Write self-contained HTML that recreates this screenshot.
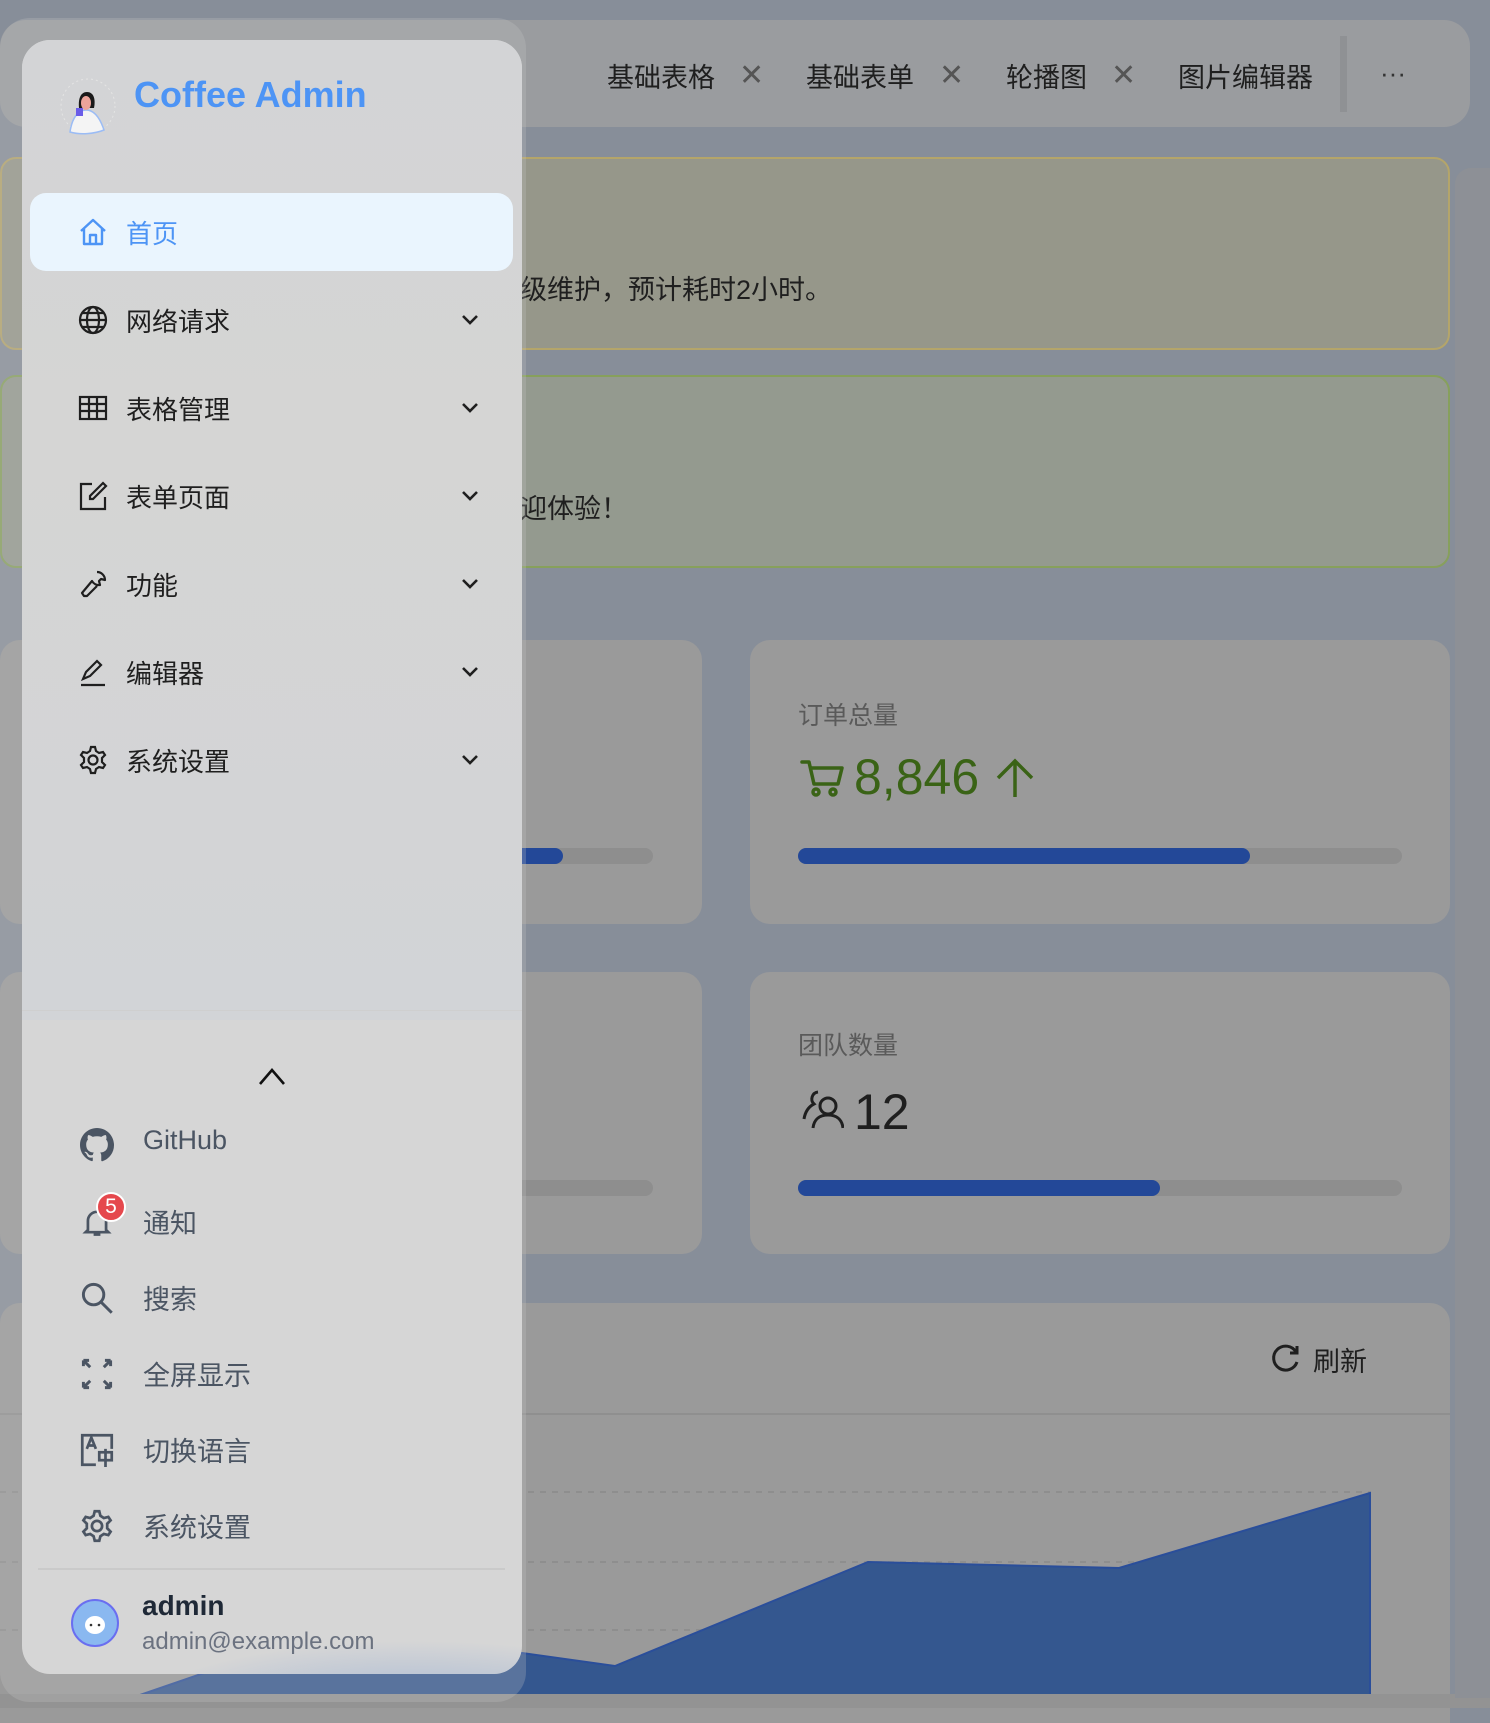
<!DOCTYPE html>
<html><head><meta charset="utf-8"><style>
*{margin:0;padding:0;box-sizing:border-box}
body{width:1490px;height:1708px;overflow:hidden;background:#878e99;font-family:"Liberation Sans","Noto Sans CJK SC",sans-serif;position:relative;color:#1f1f1f}
.abs{position:absolute}
.card{position:absolute;background:#9a9a9a;border-radius:20px}
.tab{position:absolute;top:56px;font-size:27px;color:#1f1f1f}
.x{position:absolute;top:58px;font-size:30px;color:#555;font-weight:300}
.item{position:absolute;left:30px;width:483px;height:78px;display:flex;align-items:center}
.item .ic{position:absolute;left:48px;width:30px;height:30px}
.item .t{position:absolute;left:96px;font-size:26px;color:#1f1f1f}
.item .ch{position:absolute;left:430px;width:20px;height:20px}
.bi{position:absolute;left:80px;height:40px;width:400px}
.bi svg{position:absolute;left:0;top:5px;width:34px;height:34px}
.bi .t{position:absolute;left:63px;top:2px;font-size:27px;color:#4b5563}
</style></head><body>
<!-- tab bar -->
<div class="abs" style="left:0;top:20px;width:1470px;height:107px;background:#9a9c9f;border-radius:26px"></div>
<div class="tab" style="left:607px">基础表格</div><div class="x" style="left:739px">✕</div>
<div class="tab" style="left:806px">基础表单</div><div class="x" style="left:939px">✕</div>
<div class="tab" style="left:1006px">轮播图</div><div class="x" style="left:1111px">✕</div>
<div class="tab" style="left:1178px">图片编辑器</div>
<div class="abs" style="left:1340px;top:36px;width:7px;height:76px;background:#8f9194"></div>
<div class="abs" style="left:1380px;top:58px;font-size:26px;color:#333">···</div>
<!-- alerts -->
<div class="abs" style="left:0;top:157px;width:1450px;height:193px;background:#96978a;border:2px solid #b4a56a;border-radius:16px"></div>
<div class="abs" style="left:520px;top:268px;font-size:27px">级维护，预计耗时2小时。</div>
<div class="abs" style="left:0;top:375px;width:1450px;height:193px;background:#949a8f;border:2px solid #87a05c;border-radius:16px"></div>
<div class="abs" style="left:520px;top:487px;font-size:27px">迎体验！</div>
<!-- stat cards -->
<div class="card" style="left:0;top:640px;width:702px;height:284px"></div>
<div class="abs" style="left:50px;top:848px;width:603px;height:16px;background:#8e8e8e;border-radius:8px"></div>
<div class="abs" style="left:50px;top:848px;width:513px;height:16px;background:#234898;border-radius:8px"></div>
<div class="card" style="left:750px;top:640px;width:700px;height:284px"></div>
<div class="abs" style="left:798px;top:696px;font-size:25px;color:#5a5a5a">订单总量</div>
<svg class="abs" style="left:800px;top:758px" width="44" height="40" viewBox="0 0 44 40" fill="none" stroke="#3a6316" stroke-width="3.5" stroke-linecap="round" stroke-linejoin="round"><path d="M2 4h7l5 22h24l4-16H12"/><circle cx="16" cy="34" r="3"/><circle cx="33" cy="34" r="3"/></svg>
<div class="abs" style="left:854px;top:748px;font-size:50px;color:#3a6316">8,846</div>
<svg class="abs" style="left:995px;top:758px" width="40" height="40" viewBox="0 0 40 40" fill="none" stroke="#3a6316" stroke-width="3.5"><path d="M20 39V3M3 20L20 3l17 17"/></svg>
<div class="abs" style="left:798px;top:848px;width:604px;height:16px;background:#8e8e8e;border-radius:8px"></div>
<div class="abs" style="left:798px;top:848px;width:452px;height:16px;background:#234898;border-radius:8px"></div>
<div class="card" style="left:0;top:972px;width:702px;height:282px"></div>
<div class="abs" style="left:50px;top:1180px;width:603px;height:16px;background:#8e8e8e;border-radius:8px"></div>
<div class="card" style="left:750px;top:972px;width:700px;height:282px"></div>
<div class="abs" style="left:798px;top:1026px;font-size:25px;color:#5a5a5a">团队数量</div>
<svg class="abs" style="left:800px;top:1088px" width="44" height="42" viewBox="0 0 44 42" fill="none" stroke="#1f1f1f" stroke-width="3"><circle cx="28" cy="18" r="8"/><path d="M13 40c1-9 7-13 15-13s14 4 15 13"/><path d="M18 4a7 7 0 0 0-4 12c-6 3-9 9-10 15"/></svg>
<div class="abs" style="left:854px;top:1083px;font-size:50px;color:#1f1f1f">12</div>
<div class="abs" style="left:798px;top:1180px;width:604px;height:16px;background:#8e8e8e;border-radius:8px"></div>
<div class="abs" style="left:798px;top:1180px;width:362px;height:16px;background:#234898;border-radius:8px"></div>
<!-- chart card -->
<div class="card" style="left:0;top:1303px;width:1450px;height:420px;border-radius:20px 20px 0 0"></div>
<div class="abs" style="left:0;top:1413px;width:1450px;height:2px;background:#8f8f8f"></div>
<svg class="abs" style="left:1270px;top:1343px" width="30" height="30" viewBox="0 0 30 30" fill="none" stroke="#1f1f1f" stroke-width="3"><path d="M26 9A12 12 0 1 0 27 19"/><path d="M27 3v7h-7"/></svg>
<div class="abs" style="left:1313px;top:1340px;font-size:27px">刷新</div>
<svg class="abs" style="left:0;top:1480px" width="1450" height="215"><g stroke="#8a8a8a" stroke-dasharray="6 6" stroke-width="1.5"><line x1="0" y1="12" x2="1370" y2="12"/><line x1="0" y1="82" x2="1370" y2="82"/><line x1="0" y1="150" x2="1370" y2="150"/></g><polygon points="140,215 300,160 522,173 615,186 868,82 1119,88 1370,13 1370,215" fill="#34578f" stroke="#2a4e9a" stroke-width="2"/></svg>
<div class="abs" style="left:0;top:1694px;width:1490px;height:14px;background:#939393"></div>
<div class="abs" style="left:1455px;top:168px;width:35px;height:1530px;background:#8d9096;border-radius:16px 0 0 0"></div>
<!-- sidebar halo -->
<div class="abs" style="left:0;top:18px;width:526px;height:1684px;background:rgba(200,200,200,0.25);border-radius:30px"></div>
<!-- sidebar -->
<div class="abs" style="left:22px;top:40px;width:500px;height:1634px;background:#d6d6d6;border-radius:28px;overflow:hidden">
 <div class="abs" style="left:0;top:0;width:500px;height:980px;background:linear-gradient(#d3d4d6,#d5d5d4 40%,#d2d4d7)"></div>
 <div class="abs" style="left:0;top:970px;width:500px;height:1px;background:#cfcfcf"></div>
 <div class="abs" style="left:100px;top:1600px;width:420px;height:80px;background:radial-gradient(ellipse at 70% 100%,#9fb3d3,rgba(160,180,210,0) 70%)"></div>
</div>
<!-- logo -->
<svg class="abs" style="left:60px;top:76px" width="56" height="62" viewBox="0 0 56 62"><circle cx="28" cy="30" r="27" fill="none" stroke="#e4e4e4" stroke-dasharray="2 3"/><path d="M10 56c2-14 8-22 16-22s14 8 18 20c-10 4-24 5-34 2z" fill="#f4f4f4" stroke="#9bbcf5" stroke-width="1.5"/><path d="M19 32c-1-10 2-16 8-16s9 6 7 16z" fill="#1a1a1a"/><ellipse cx="26" cy="27" rx="5" ry="7" fill="#eda49a"/><rect x="16" y="32" width="7" height="8" fill="#6a5ce8"/></svg>
<div class="abs" style="left:134px;top:74px;font-size:36px;font-weight:bold;color:#4d94f5">Coffee Admin</div>
<!-- menu -->
<div class="item" style="top:193px;background:#eaf5fe;border-radius:16px">
 <svg class="ic" viewBox="0 0 30 30" fill="none" stroke="#4d94f5" stroke-width="2.4" stroke-linejoin="round"><path d="M3 14L15 3l12 11M6 11v16h18V11M12 27v-9h6v9"/></svg>
 <span class="t" style="color:#4d94f5">首页</span></div>
<div class="item" style="top:281px"><svg class="ic" viewBox="0 0 30 30" fill="none" stroke="#1f1f1f" stroke-width="2.2"><circle cx="15" cy="15" r="13"/><ellipse cx="15" cy="15" rx="6" ry="13"/><path d="M2 15h26M4 8h22M4 22h22"/></svg><span class="t">网络请求</span><svg class="ch" viewBox="0 0 20 20" fill="none" stroke="#1f1f1f" stroke-width="2.6"><path d="M3 6l7 7 7-7"/></svg></div>
<div class="item" style="top:369px"><svg class="ic" viewBox="0 0 30 30" fill="none" stroke="#1f1f1f" stroke-width="2.2"><rect x="2" y="4" width="26" height="22"/><path d="M2 11h26M2 18h26M11 4v22M19 4v22"/></svg><span class="t">表格管理</span><svg class="ch" viewBox="0 0 20 20" fill="none" stroke="#1f1f1f" stroke-width="2.6"><path d="M3 6l7 7 7-7"/></svg></div>
<div class="item" style="top:457px"><svg class="ic" viewBox="0 0 30 30" fill="none" stroke="#1f1f1f" stroke-width="2.2"><path d="M14 3H3v25h24V16"/><path d="M25 2l3 3-13 13H12v-3z"/></svg><span class="t">表单页面</span><svg class="ch" viewBox="0 0 20 20" fill="none" stroke="#1f1f1f" stroke-width="2.6"><path d="M3 6l7 7 7-7"/></svg></div>
<div class="item" style="top:545px"><svg class="ic" viewBox="0 0 30 30" fill="none" stroke="#1f1f1f" stroke-width="2.2" stroke-linejoin="round"><path d="M19 3a8 8 0 0 1 8 8l-4-1-2 2 1 4a8 8 0 0 1-8-4L4 24l2 3 3 0 10-10"/></svg><span class="t">功能</span><svg class="ch" viewBox="0 0 20 20" fill="none" stroke="#1f1f1f" stroke-width="2.6"><path d="M3 6l7 7 7-7"/></svg></div>
<div class="item" style="top:633px"><svg class="ic" viewBox="0 0 30 30" fill="none" stroke="#1f1f1f" stroke-width="2.2"><path d="M5 22l3-7L19 4l4 4-11 11z"/><path d="M3 28h24"/></svg><span class="t">编辑器</span><svg class="ch" viewBox="0 0 20 20" fill="none" stroke="#1f1f1f" stroke-width="2.6"><path d="M3 6l7 7 7-7"/></svg></div>
<div class="item" style="top:721px"><svg class="ic" viewBox="0 0 30 30" fill="none" stroke="#1f1f1f" stroke-width="2.2"><circle cx="15" cy="15" r="4.5"/><path d="M13 2h4l1 4 3 2 4-1 2 3-3 3v4l3 3-2 3-4-1-3 2-1 4h-4l-1-4-3-2-4 1-2-3 3-3v-4L3 10l2-3 4 1 3-2z"/></svg><span class="t">系统设置</span><svg class="ch" viewBox="0 0 20 20" fill="none" stroke="#1f1f1f" stroke-width="2.6"><path d="M3 6l7 7 7-7"/></svg></div>
<svg class="abs" style="left:258px;top:1066px" width="28" height="20" viewBox="0 0 28 20" fill="none" stroke="#111" stroke-width="2.6"><path d="M2 18L14 4l12 14"/></svg>
<!-- bottom list -->
<div class="bi" style="top:1123px"><svg viewBox="0 0 16 16"><path fill="#4b5563" d="M8 0C3.58 0 0 3.58 0 8c0 3.54 2.29 6.53 5.47 7.59.4.07.55-.17.55-.38v-1.33c-2.23.48-2.7-1.070-2.7-1.07-.36-.92-.89-1.17-.89-1.17-.73-.5.06-.49.06-.49.8.06 1.23.83 1.23.83.71 1.22 1.870.87 2.33.66.07-.52.28-.87.5-1.07-1.78-.2-3.64-.89-3.64-3.95 0-.87.31-1.59.82-2.15-.08-.2-.36-1.02.08-2.12 0 0 .67-.21 2.2.82a7.6 7.6 0 0 1 4 0c1.53-1.04 2.2-.82 2.2-.82.44 1.1.16 1.92.08 2.12.51.56.82 1.27.82 2.15 0 3.07-1.87 3.75-3.65 3.95.29.25.54.73.54 1.48v2.2c0 .21.15.46.55.38A8 8 0 0 0 16 8c0-4.42-3.58-8-8-8z"/></svg><span class="t">GitHub</span></div>
<div class="bi" style="top:1200px"><svg viewBox="0 0 30 30" fill="none" stroke="#4b5563" stroke-width="2.4"><path d="M7 22V14a8 8 0 0 1 16 0v8l2 2H5z M12 26h6"/></svg><span class="t">通知</span></div>
<div class="abs" style="left:96px;top:1192px;width:30px;height:30px;border-radius:50%;background:#e5484d;border:2px solid #fff;color:#fff;font-size:21px;text-align:center;line-height:26px">5</div>
<div class="bi" style="top:1276px"><svg viewBox="0 0 30 30" fill="none" stroke="#4b5563" stroke-width="2.6"><circle cx="12" cy="12" r="9"/><path d="M19 19l9 9"/></svg><span class="t">搜索</span></div>
<div class="bi" style="top:1352px"><svg viewBox="0 0 30 30" fill="none" stroke="#4b5563" stroke-width="2.6"><path d="M3 3l6 6M3 3h5M3 3v5M27 3l-6 6M27 3h-5M27 3v5M3 27l6-6M3 27h5M3 27v-5M27 27l-6-6M27 27h-5M27 27v-5"/></svg><span class="t">全屏显示</span></div>
<div class="bi" style="top:1428px"><svg viewBox="0 0 30 30" fill="none" stroke="#4b5563" stroke-width="2.4"><path d="M14 28H2V2h26v12"/><path d="M6 14l4-10 4 10M7 11h6"/><rect x="17" y="17" width="11" height="7"/><path d="M22.5 14v16"/></svg><span class="t">切换语言</span></div>
<div class="bi" style="top:1504px"><svg viewBox="0 0 30 30" fill="none" stroke="#4b5563" stroke-width="2.4"><circle cx="15" cy="15" r="4.5"/><path d="M13 2h4l1 4 3 2 4-1 2 3-3 3v4l3 3-2 3-4-1-3 2-1 4h-4l-1-4-3-2-4 1-2-3 3-3v-4L3 10l2-3 4 1 3-2z"/></svg><span class="t">系统设置</span></div>
<div class="abs" style="left:38px;top:1568px;width:467px;height:2px;background:#cacaca"></div>
<svg class="abs" style="left:70px;top:1598px" width="50" height="50" viewBox="0 0 50 50"><circle cx="25" cy="25" r="23" fill="#8ab8f0" stroke="#6a6ef0" stroke-width="2"/><ellipse cx="25" cy="27" rx="10" ry="9" fill="#fff"/><circle cx="21" cy="27" r="1.3" fill="#333"/><circle cx="29" cy="27" r="1.3" fill="#333"/></svg>
<div class="abs" style="left:142px;top:1590px;font-size:28px;font-weight:bold;color:#1f2937">admin</div>
<div class="abs" style="left:142px;top:1628px;font-size:24px;color:#6b7280">admin@example.com</div>
</body></html>
